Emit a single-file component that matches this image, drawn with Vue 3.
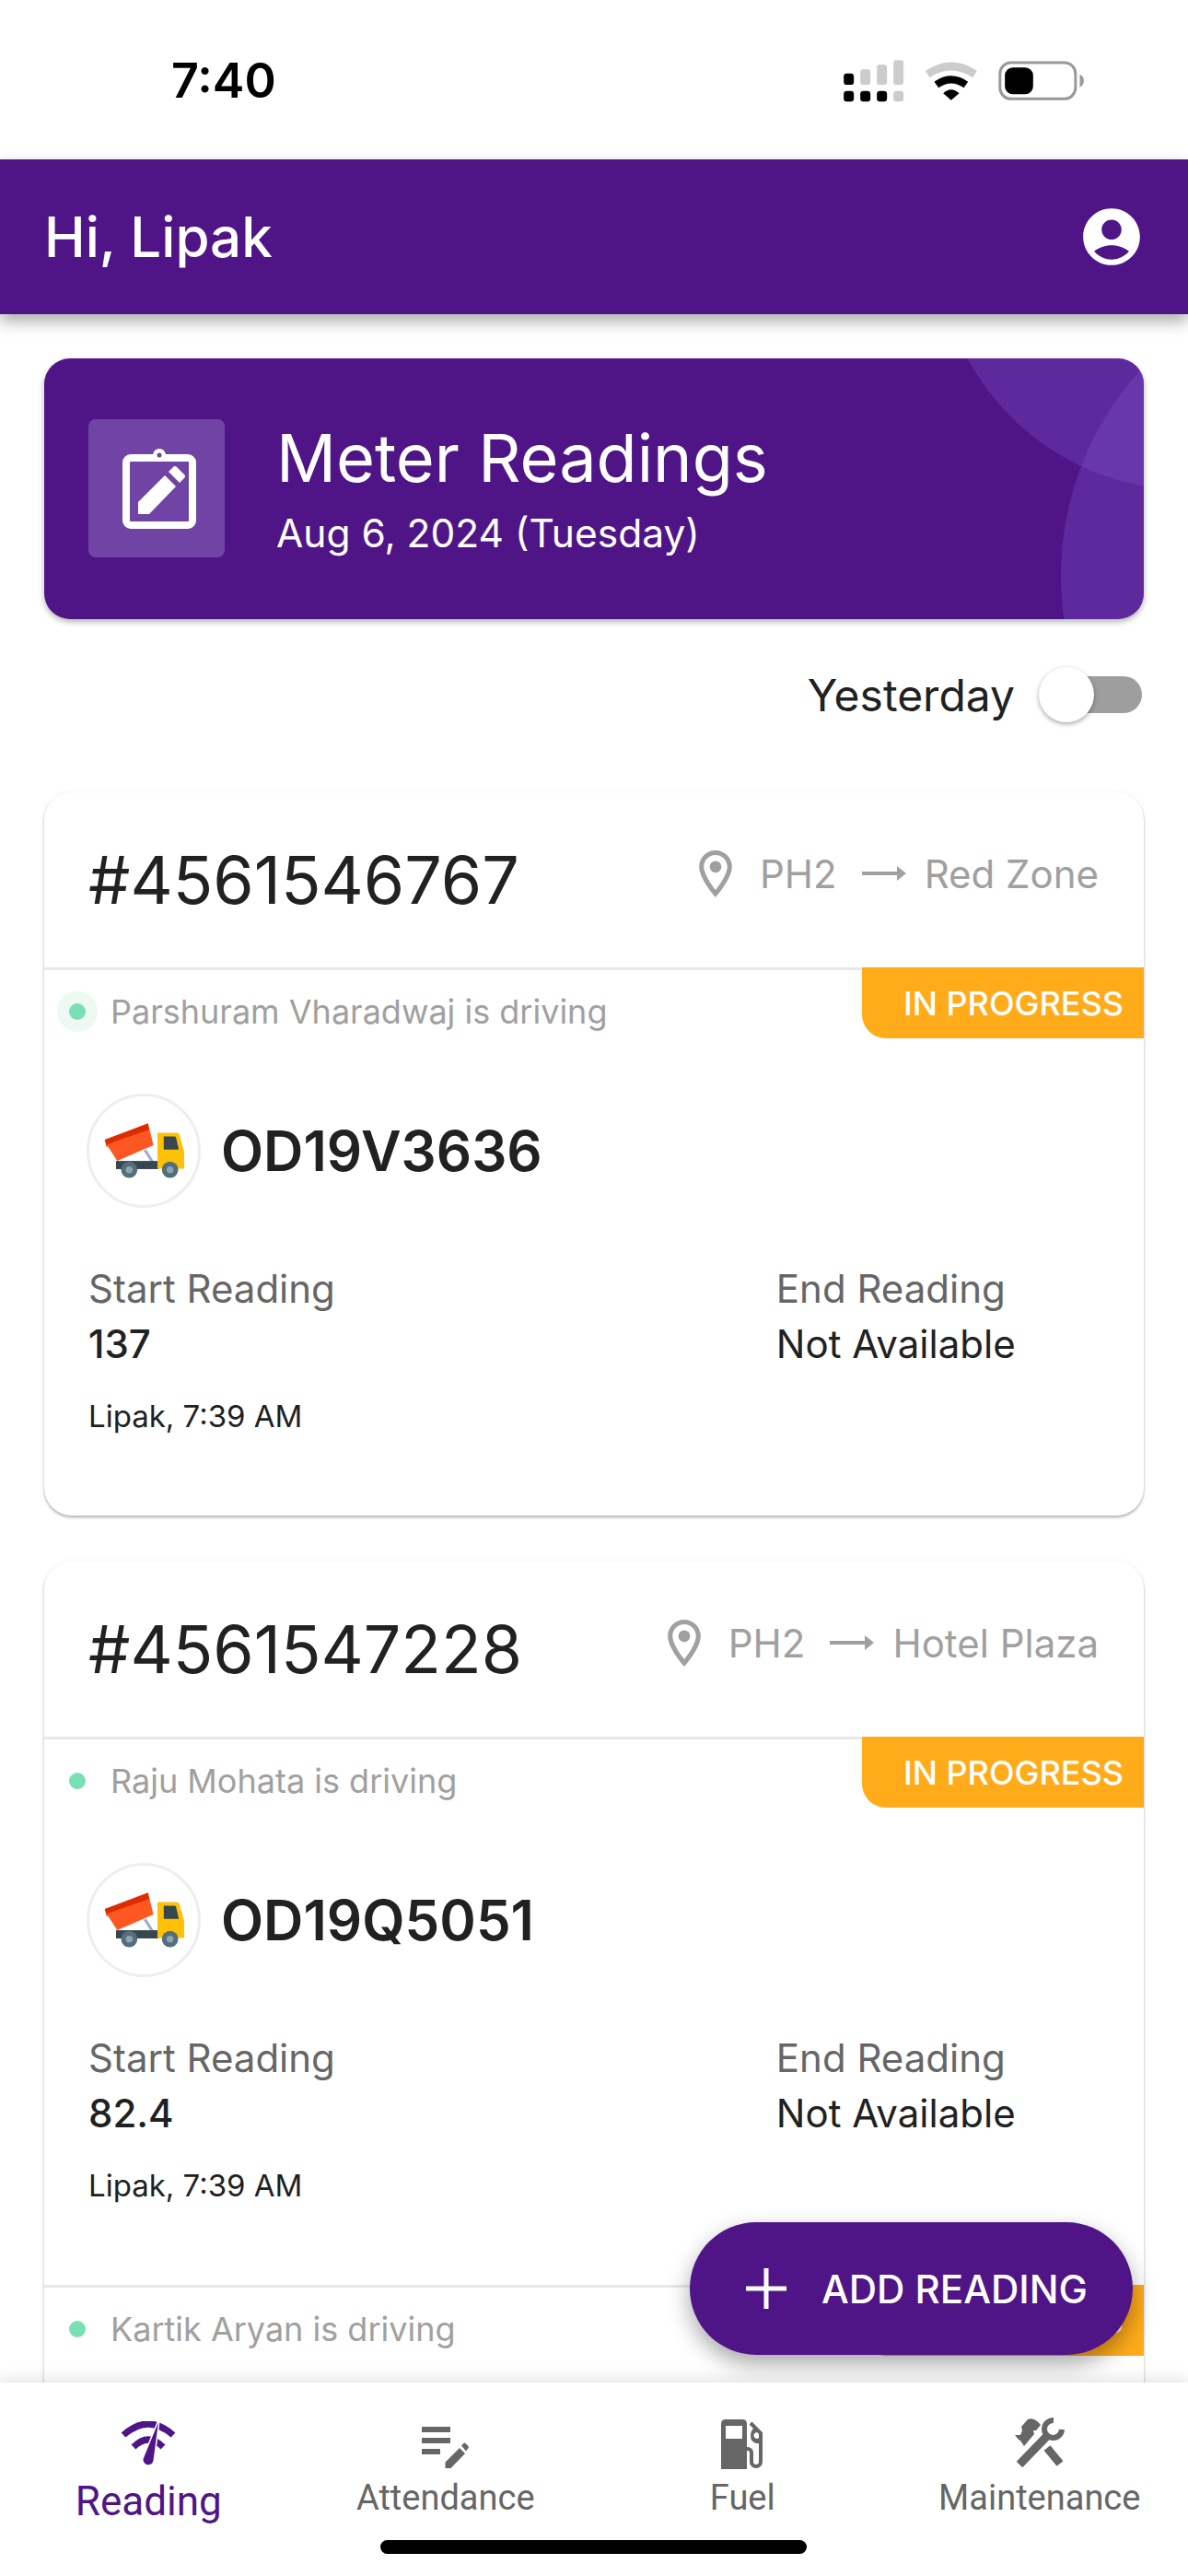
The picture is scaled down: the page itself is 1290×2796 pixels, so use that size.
<template>
  <div class="screen">
    <div class="status-bar">
      <span class="time">7:40</span>
      <svg class="status-icons" viewBox="168 62 782 150" width="261" height="50">
        <g fill="#ccc">
          <rect x="168" y="115" width="33" height="37" rx="10" fill="#000" />
          <rect x="222" y="102" width="33" height="50" rx="10" />
          <rect x="276" y="87" width="33" height="65" rx="10" />
          <rect x="330" y="72" width="33" height="80" rx="10" />
          <rect x="168" y="172" width="33" height="35" rx="10" fill="#000" />
          <rect x="222" y="172" width="33" height="35" rx="10" fill="#000" />
          <rect x="276" y="172" width="33" height="35" rx="10" fill="#000" />
          <rect x="330" y="172" width="33" height="35" rx="10" />
        </g>
        <path d="M441 118Q518 66 595 118" fill="none" stroke="#ccc" stroke-width="26" />
        <path d="M470 152Q518 118 566 152" fill="none" stroke="#000" stroke-width="24" />
        <path d="M492 180Q518 156 544 180L518 202Z" fill="#000" />
        <rect x="677" y="80" width="246" height="118" rx="36" fill="#fff" stroke="#999" stroke-width="9" />
        <rect x="693" y="96" width="92" height="87" rx="26" fill="#000" />
        <path d="M937 118Q950 124 950 139T937 160Z" fill="#999" />
      </svg>
    </div>

    <header class="app-bar">
      <span class="greeting">Hi, Lipak</span>
      <svg viewBox="0 0 24 24" width="74" height="74" fill="#fff">
        <path
          d="M12 2C6.48 2 2 6.48 2 12s4.48 10 10 10 10-4.48 10-10S17.52 2 12 2zm0 4c1.93 0 3.5 1.57 3.5 3.5S13.93 13 12 13s-3.5-1.57-3.5-3.5S10.07 6 12 6zm0 14c-2.03 0-4.43-.82-6.14-2.88C7.55 15.8 9.68 15 12 15s4.45.8 6.14 2.12C16.43 19.18 14.03 20 12 20z" />
      </svg>
    </header>

    <main class="content">
      <section class="banner">
        <span class="swoosh swoosh-top"></span>
        <span class="swoosh swoosh-right"></span>
        <div class="banner-icon">
          <svg viewBox="0 0 80 88" width="80" height="88" fill="none">
            <rect x="4" y="11" width="72" height="73" rx="5" stroke="#fff" stroke-width="8" />
            <circle cx="40" cy="8" r="7" fill="#fff" />
            <circle cx="40" cy="8" r="2.500" fill="#7044a4" />
            <path d="M17 72V59L46 30l12 12-29 30Z" fill="#fff" />
            <path d="M50 26l5-5q2-2 4 0l8 8q2 2 0 4l-5 5Z" fill="#fff" />
          </svg>
        </div>
        <div>
          <div class="banner-title">Meter Readings</div>
          <div class="banner-date">Aug 6, 2024 (Tuesday)</div>
        </div>
      </section>

      <div class="toggle-row">
        <span>Yesterday</span>
        <span class="switch"><span class="thumb"></span></span>
      </div>

      <section v-for="g in groups" :key="g.id" class="card">
        <div class="card-head">
          <span class="order-id">#{{ g.id }}</span>
          <span class="route">
            <svg viewBox="5 2 14 20" width="36" height="51" fill="#a0a0a0">
              <path
                d="M12 2C8.13 2 5 5.130 5 9c0 5.250 7 13 7 13s7-7.750 7-13c0-3.870-3.130-7-7-7zM7 9c0-2.760 2.240-5 5-5s5 2.240 5 5c0 2.880-2.880 7.190-5 9.880C9.920 16.210 7 11.850 7 9z" />
              <circle cx="12" cy="9" r="2.500" />
            </svg>
            <span class="route-from">PH2</span>
            <svg class="route-arrow" viewBox="0 0 48 16" width="48" height="16" fill="#a0a0a0">
              <path d="M0 6h38V0l10 8-10 8v-6H0Z" />
            </svg>
            <span>{{ g.to }}</span>
          </span>
        </div>

        <div v-for="t in g.trips" :key="t.driver" class="trip">
          <span class="badge">IN PROGRESS</span>
          <div class="driver">
            <span class="dot" :class="{ halo: t.halo }"></span>
            <span>{{ t.driver }} is driving</span>
          </div>
          <template v-if="t.plate">
            <div class="vehicle">
              <span class="truck-ring">
                <svg viewBox="0 0 255 175" width="87" height="60">
                  <path d="M2 52 140 0l5 22L8 75Z" fill="#dd2c00" />
                  <path d="M8 68 145 20l12 50-115 50Z" fill="#ff5722" />
                  <path d="M130 85l25 40" stroke="#9fa8da" stroke-width="9" />
                  <rect x="38" y="120" width="135" height="26" fill="#37474f" />
                  <path d="M170 30h62q6 0 8 8l15 52v55h-85Z" fill="#ffc107" />
                  <path d="M190 42h34q4 0 5 4l9 38h-48Z" fill="#37474f" />
                  <circle cx="80" cy="148" r="26" fill="#546e7a" />
                  <circle cx="80" cy="148" r="11" fill="#90a4ae" />
                  <circle cx="210" cy="148" r="26" fill="#546e7a" />
                  <circle cx="210" cy="148" r="11" fill="#90a4ae" />
                </svg>
              </span>
              <span class="plate">{{ t.plate }}</span>
            </div>
            <div class="readings">
              <div>
                <div class="reading-label">Start Reading</div>
                <div class="reading-value start">{{ t.start }}</div>
                <div class="reading-by">Lipak, 7:39 AM</div>
              </div>
              <div class="reading-end">
                <div class="reading-label">End Reading</div>
                <div class="reading-value">Not Available</div>
              </div>
            </div>
          </template>
        </div>
      </section>
    </main>

    <button class="fab">
      <svg viewBox="0 0 44 44" width="44" height="44" fill="#fff">
        <path d="M19.500 0h5v19.500H44v5H24.500V44h-5V24.500H0v-5h19.500Z" />
      </svg>
      <span>ADD READING</span>
    </button>

    <nav class="tabs">
      <div class="tab active">
        <svg viewBox="0 0 62 48" width="62" height="48" fill="none">
          <path d="M4 15Q31-9 58 15" stroke="#4f1587" stroke-width="7" />
          <path d="M15 28Q31 12 47 28" stroke="#4f1587" stroke-width="7" />
          <path d="M42 1 36.500 42.500A5.500 5.500 0 0 1 25.500 41Z" fill="#4f1587" stroke="#fff" stroke-width="3"
            paint-order="stroke" />
        </svg>
        <span>Reading</span>
      </div>
      <div class="tab">
        <svg viewBox="0 0 52 46" width="52" height="46" fill="#666">
          <rect width="31" height="6" />
          <rect y="12" width="31" height="6" />
          <rect y="24" width="20" height="6" />
          <path d="M25.500 45v-6.500L41 23l6 6-15.500 16Z" />
          <path d="M43 20.500l2.500-2.500q1-1 2 0l3 3q1 1 0 2L48 26.500Z" />
        </svg>
        <span>Attendance</span>
      </div>
      <div class="tab">
        <svg viewBox="0 0 47 54" width="47" height="54" fill="#666">
          <path fill-rule="evenodd" d="M5 0h18q5 0 5 5v49H0V5q0-5 5-5ZM5 7v14h18V7Z" />
          <path d="M32 4 43 15V46a5 5 0 0 1-10 0V36a4 4 0 0 0-4-4h-1" fill="none" stroke="#666" stroke-width="4" />
          <path fill-rule="evenodd" d="M36 9 45 18V26H38Q32 24 32 18T36 9ZM39 14a3.500 3.500 0 1 0 .01 0Z" />
        </svg>
        <span>Fuel</span>
      </div>
      <div class="tab">
        <svg viewBox="0 0 55 56" width="55" height="56" fill="#666">
          <path d="M1 19H7L9 14 8 10 15 2Q22-1 29 8L24 14 21 14 22 18 11 31 7 25 5 24Z" />
          <path d="M6 51 37 19" stroke="#666" stroke-width="9" fill="none" />
          <path d="M36 33 50 50" stroke="#666" stroke-width="9" fill="none" />
          <path d="M43 3A9.500 9.500 0 1 0 52 13" stroke="#666" stroke-width="6" fill="none" />
        </svg>
        <span>Maintenance</span>
      </div>
      <span class="home-bar"></span>
    </nav>
  </div>
</template>

<script setup>
const groups = [
  {
    id: '4561546767',
    to: 'Red Zone',
    trips: [{ driver: 'Parshuram Vharadwaj', plate: 'OD19V3636', start: '137', halo: true }]
  },
  {
    id: '4561547228',
    to: 'Hotel Plaza',
    trips: [
      { driver: 'Raju Mohata', plate: 'OD19Q5051', start: '82.4' },
      { driver: 'Kartik Aryan', plate: '' }
    ]
  }
]
</script>

<style scoped>
.screen {
  position: relative;
  width: 1290px;
  height: 2796px;
  overflow: hidden;
  background: #fff;
  font-family: Inter, "Liberation Sans", sans-serif;
  color: #212121;
}

.status-bar {
  height: 173px;
  box-sizing: border-box;
  padding: 54px 113px 0 186px;
  display: flex;
  justify-content: space-between;
  align-items: flex-start;
}

.status-bar .time {
  font-size: 52px;
  font-weight: 600;
  line-height: 68px;
  color: #000;
}

.status-icons {
  margin-top: 8px;
}

.app-bar {
  position: relative;
  height: 168px;
  box-sizing: border-box;
  padding: 0 46px 0 48px;
  display: flex;
  align-items: center;
  justify-content: space-between;
  background: #4f1587;
  color: #fff;
  box-shadow: 0 8px 16px rgba(0, 0, 0, 0.32);
}

.greeting {
  font-size: 60px;
  font-weight: 500;
}

.content {
  padding: 48px 48px 0;
}

.banner {
  position: relative;
  height: 283px;
  box-sizing: border-box;
  padding-left: 48px;
  display: flex;
  align-items: center;
  gap: 56px;
  overflow: hidden;
  border-radius: 28px;
  background: #4f1587;
  color: #fff;
  box-shadow: 0 3px 6px rgba(0, 0, 0, 0.3);
}

.swoosh {
  position: absolute;
  border-radius: 50%;
  background: rgba(130, 90, 210, 0.3);
}

.swoosh-top {
  left: 970px;
  top: -401px;
  width: 544px;
  height: 544px;
}

.swoosh-right {
  left: 1104px;
  top: -96px;
  width: 664px;
  height: 664px;
}

.banner-icon {
  width: 148px;
  height: 150px;
  margin-top: -2px;
  border-radius: 8px;
  background: #7044a4;
  display: flex;
  align-items: center;
  justify-content: center;
}

.banner-icon svg {
  margin-left: 5px;
}

.banner-title {
  font-size: 72px;
  line-height: 84px;
  margin-top: 1px;
}

.banner-date {
  font-size: 42.500px;
  line-height: 56px;
  margin-top: 12px;
}

.toggle-row {
  height: 188px;
  box-sizing: border-box;
  padding: 0 2px 24px 0;
  display: flex;
  align-items: center;
  justify-content: flex-end;
  gap: 38px;
  font-size: 48px;
}

.switch {
  position: relative;
  width: 100px;
  height: 40px;
  border-radius: 20px;
  background: #9e9e9e;
}

.thumb {
  position: absolute;
  left: -12px;
  top: -10px;
  width: 60px;
  height: 60px;
  border-radius: 50%;
  background: #fff;
  box-shadow: 0 2px 5px rgba(0, 0, 0, 0.35);
}

.card {
  overflow: hidden;
  margin-bottom: 50px;
  border-radius: 30px;
  background: #fff;
  box-shadow: 0 2px 3px rgba(0, 0, 0, 0.3), 0 0 8px rgba(0, 0, 0, 0.04);
}

.card-head {
  height: 190px;
  box-sizing: border-box;
  padding: 0 49px 0 48px;
  display: flex;
  align-items: center;
  justify-content: space-between;
}

.order-id {
  font-size: 71.700px;
}

.route {
  display: flex;
  align-items: center;
  margin-top: -14px;
  font-size: 42px;
  color: #a0a0a0;
}

.route-from {
  margin: 0 27px 0 30px;
}

.route-arrow {
  margin-right: 20px;
}

.trip {
  position: relative;
  height: 595px;
  box-sizing: border-box;
  border-top: 3px solid #e8e8e8;
}

.badge {
  position: absolute;
  right: 0;
  top: -3px;
  width: 306px;
  height: 77px;
  box-sizing: border-box;
  padding: 0 22px 0 0;
  display: flex;
  align-items: center;
  justify-content: flex-end;
  border-bottom-left-radius: 26px;
  background: #ffab1a;
  color: #fff;
  font-size: 36px;
  font-weight: 500;
}

.driver {
  height: 90px;
  padding-left: 27px;
  display: flex;
  align-items: center;
  gap: 27px;
  font-size: 36px;
  color: #a0a0a0;
}

.dot {
  width: 18px;
  height: 18px;
  border-radius: 50%;
  background: #7adfb4;
}

.dot.halo {
  box-shadow: 0 0 0 13px #edfaf4;
}

.vehicle {
  margin-top: 44px;
  padding-left: 46px;
  display: flex;
  align-items: center;
  gap: 22px;
}

.truck-ring {
  width: 124px;
  height: 124px;
  box-sizing: border-box;
  border: 3px solid #eee;
  border-radius: 50%;
  display: flex;
  align-items: center;
  justify-content: center;
}

.plate {
  font-size: 60px;
  font-weight: 600;
}

.readings {
  margin-top: 58px;
  padding-left: 48px;
  display: flex;
}

.reading-end {
  margin-left: 479px;
}

.reading-label {
  font-size: 42px;
  line-height: 60px;
  color: #666;
}

.reading-value {
  font-size: 42px;
  line-height: 60px;
}

.reading-value.start {
  font-weight: 500;
}

.reading-by {
  margin-top: 28px;
  font-size: 33px;
  line-height: 40px;
}

.fab {
  position: absolute;
  left: 749px;
  top: 2412px;
  width: 481px;
  height: 144px;
  padding: 0 0 0 61px;
  display: flex;
  align-items: center;
  gap: 38px;
  border: none;
  border-radius: 72px;
  background: #4f1587;
  color: #fff;
  font-family: inherit;
  font-size: 42px;
  font-weight: 500;
  box-shadow: 0 10px 24px rgba(0, 0, 0, 0.35);
}

.tabs {
  position: absolute;
  left: 0;
  right: 0;
  bottom: 0;
  height: 210px;
  display: grid;
  grid-template-columns: repeat(4, 1fr);
  align-items: start;
  background: #fff;
  box-shadow: 0 -3px 16px rgba(0, 0, 0, 0.12);
  font-family: Roboto, sans-serif;
}

.tab {
  height: 153px;
  display: flex;
  flex-direction: column;
  align-items: center;
  justify-content: flex-end;
  font-size: 38px;
  line-height: 56px;
  color: #666;
}

.tab svg {
  margin-bottom: 3px;
}

.tab.active {
  height: 157px;
  font-size: 44px;
  color: #4f1587;
}

.tab.active svg {
  margin-bottom: 11px;
}

.home-bar {
  position: absolute;
  left: 413px;
  top: 171px;
  width: 463px;
  height: 15px;
  border-radius: 8px;
  background: #000;
}
</style>
